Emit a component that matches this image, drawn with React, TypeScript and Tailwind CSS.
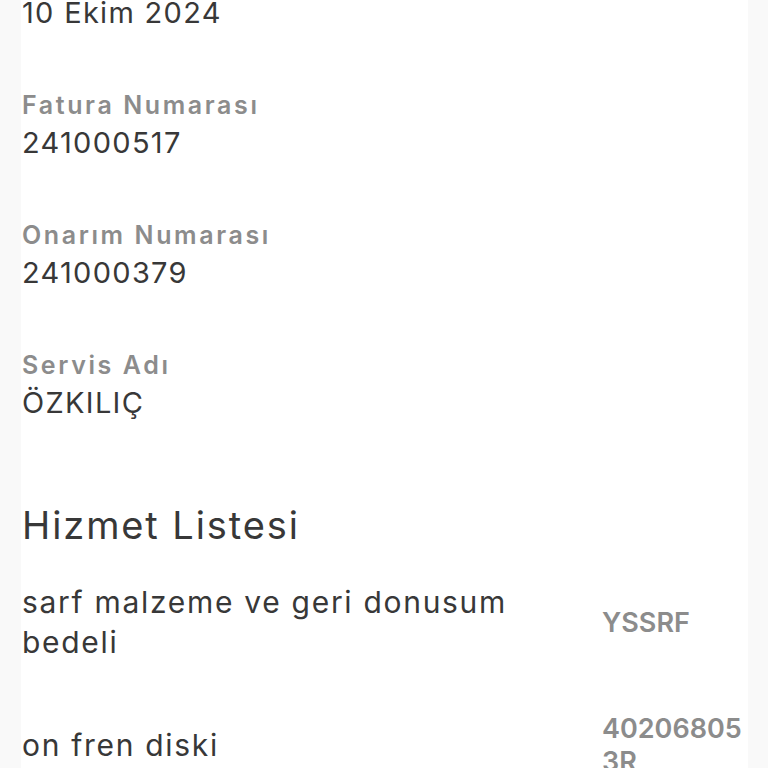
import React from "react";

const font = { fontFamily: "Inter, 'Noto Sans', sans-serif" };

function Field({ label, value }: { label: string; value: string }) {
  return (
    <div className="flex flex-col">
      <div className="text-[25px] leading-[38px] font-semibold tracking-[2.6px] text-[#8c8c8c]">{label}</div>
      <div className="text-[29px] leading-[38px] tracking-[1.3px] text-[#383838]">{value}</div>
    </div>
  );
}

function Row({ name, code }: { name: string; code: string }) {
  return (
    <div className="flex items-center gap-[22px]">
      <div className="flex-1 text-[30px] leading-[40px] tracking-[1.7px] text-[#383838]">{name}</div>
      <div className="w-[146px] shrink-0 break-all text-[27px] leading-[33px] font-semibold text-[#8c8c8c]">{code}</div>
    </div>
  );
}

export default function App() {
  return (
    <div className="flex h-[768px] w-full overflow-hidden bg-[#f9f9f9]" style={font}>
      <div className="ml-[21px] mr-[20px] flex h-full flex-1 flex-col bg-white pl-[1px]">
        <div className="-mt-[6px] flex flex-col">
          <div className="text-[29px] leading-[38px] tracking-[1.3px] text-[#383838]">10 Ekim 2024</div>
          <div className="mt-[54px] flex flex-col gap-[54px]">
            <Field label="Fatura Numarası" value="241000517" />
            <Field label="Onarım Numarası" value="241000379" />
            <Field label="Servis Adı" value="ÖZKILIÇ" />
          </div>
          <div className="mt-[80px] text-[38px] leading-[46px] tracking-[1.9px] text-[#383838]">Hizmet Listesi</div>
          <div className="mt-[34px] flex flex-col gap-[50px]">
            <Row name="sarf malzeme ve geri donusum bedeli" code="YSSRF" />
            <Row name="on fren diski" code="402068053R" />
          </div>
        </div>
      </div>
    </div>
  );
}
